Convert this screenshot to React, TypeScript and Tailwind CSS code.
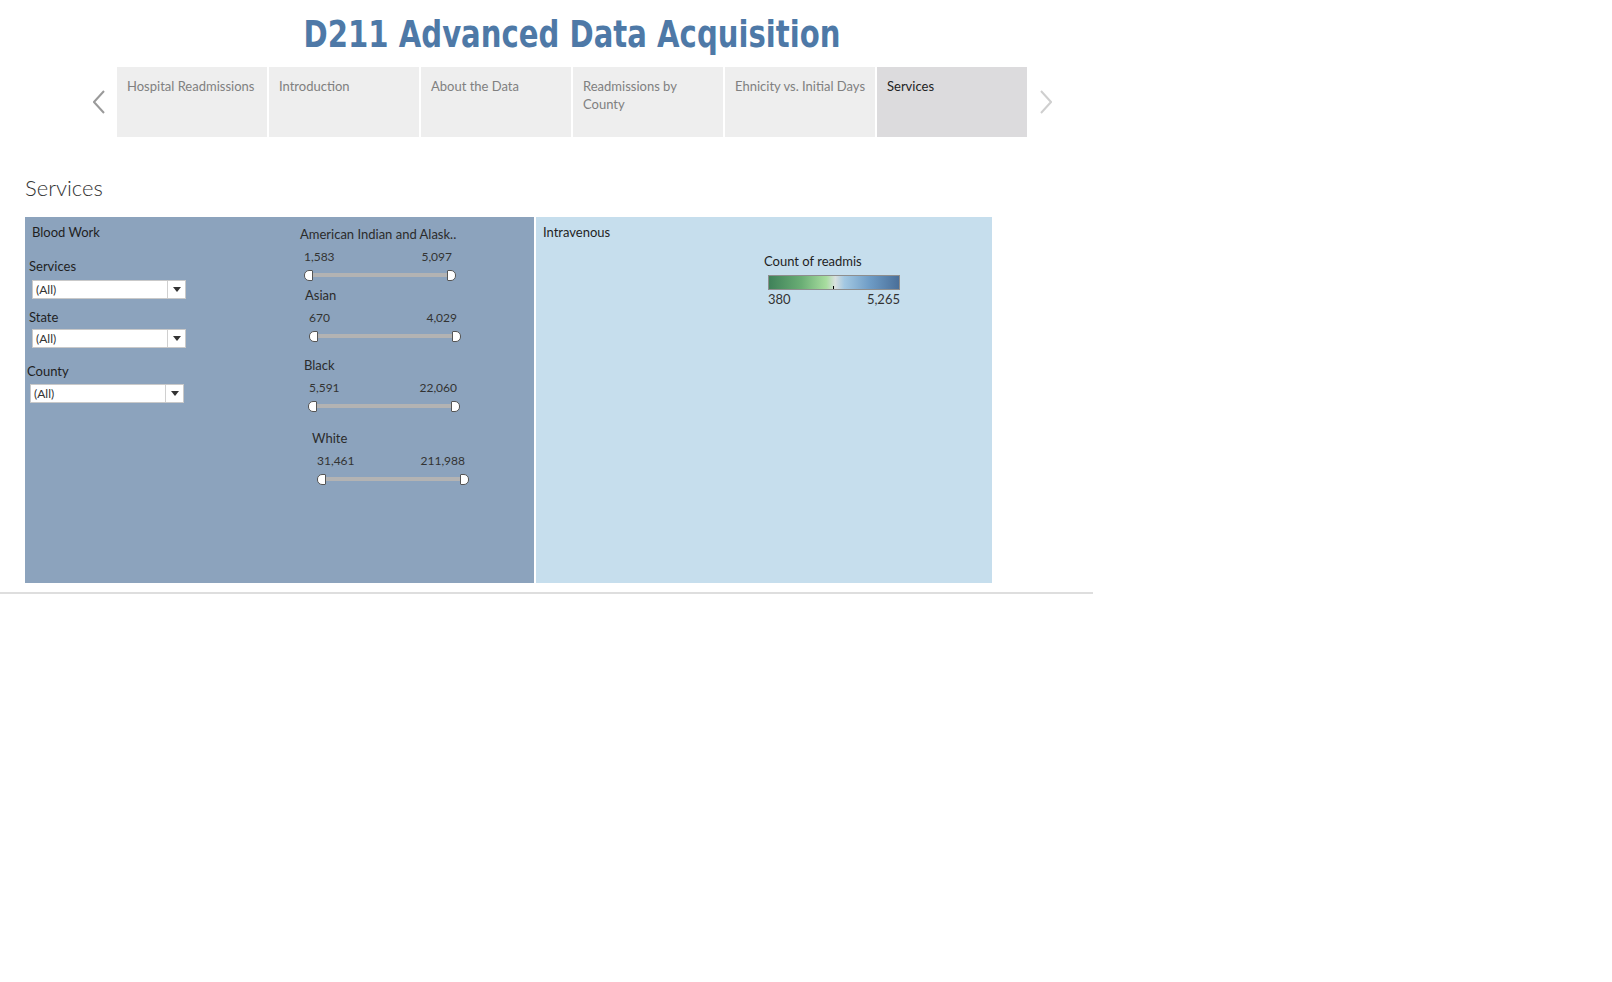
import React from "react";

const tabs = [
  "Hospital Readmissions",
  "Introduction",
  "About the Data",
  "Readmissions by County",
  "Ehnicity vs. Initial Days",
  "Services",
];

const Handle = ({ side }: { side: "left" | "right" }) => (
  <div
    className={
      side === "left"
        ? "w-[9px] h-[11px] bg-white border border-[#555] rounded-l-[5px] rounded-r-[1px]"
        : "w-[9px] h-[11px] bg-white border border-[#555] rounded-r-[5px] rounded-l-[1px]"
    }
  />
);

const Slider = ({
  label,
  min,
  max,
  labelCls,
  valuesCls,
  trackCls,
}: {
  label: string;
  min: string;
  max: string;
  labelCls: string;
  valuesCls: string;
  trackCls: string;
}) => (
  <div>
    <div className={`text-[13px] leading-[16px] text-[#2b2b2b] whitespace-nowrap ${labelCls}`}>{label}</div>
    <div className={`flex justify-between text-[12px] leading-[16px] text-[#333] ${valuesCls}`}>
      <span>{min}</span>
      <span>{max}</span>
    </div>
    <div className={`flex items-center h-[10px] ${trackCls}`}>
      <Handle side="left" />
      <div className="flex-1 h-[4px] bg-[#b3b3b3]" />
      <Handle side="right" />
    </div>
  </div>
);

const Dropdown = ({ cls }: { cls: string }) => (
  <div className={`flex h-[19px] w-[154px] bg-white border border-[#c9c9c9] ${cls}`}>
    <div className="flex-1 pl-[3px] text-[12px] leading-[17px] text-[#333]">(All)</div>
    <div className="w-[18px] border-l border-[#d0d0d0] flex items-center justify-center">
      <svg width="8" height="5" viewBox="0 0 8 5">
        <path d="M0 0 L8 0 L4 5 Z" fill="#333" />
      </svg>
    </div>
  </div>
);

export default function App() {
  return (
    <div className="relative w-[1612px] h-[982px] bg-white overflow-hidden font-['Lato','Open_Sans',sans-serif]">
      {/* title */}
      <div className="w-[1145px] pt-[12px] text-center">
        <h1 className="inline-block scale-x-[0.852] text-[38px] leading-[44px] font-bold text-[#4e79a7] font-['DejaVu_Sans_Condensed','DejaVu_Sans',sans-serif] whitespace-nowrap">
          D211 Advanced Data Acquisition
        </h1>
      </div>

      {/* story tabs */}
      <div className="mt-[11px] flex h-[70px]">
        <div className="w-[117px] flex items-center justify-end pr-[12px]">
          <svg width="12" height="24" viewBox="0 0 12 24">
            <polyline points="11,1 1,12 11,23" fill="none" stroke="#9a9a9a" strokeWidth="2" />
          </svg>
        </div>
        <div className="flex gap-[2px]">
          {tabs.map((t) => {
            const active = t === "Services";
            return (
              <div
                key={t}
                className={
                  active
                    ? "w-[150px] h-[70px] bg-[#dcdbdd] pl-[10px] pt-[10px] text-[13px] leading-[18px] text-[#222]"
                    : "w-[150px] h-[70px] bg-[#eeeeee] pl-[10px] pt-[10px] text-[13px] leading-[18px] text-[#808080]"
                }
              >
                {t === "Readmissions by County" ? (
                  <>
                    Readmissions by
                    <br />
                    County
                  </>
                ) : (
                  <span className="whitespace-nowrap">{t}</span>
                )}
              </div>
            );
          })}
        </div>
        <div className="flex items-center pl-[13px]">
          <svg width="12" height="24" viewBox="0 0 12 24">
            <polyline points="1,1 11,12 1,23" fill="none" stroke="#cfcfcf" strokeWidth="2" />
          </svg>
        </div>
      </div>

      {/* dashboard title */}
      <div className="mt-[37px] pl-[25px] text-[22px] leading-[28px] font-light text-[#333]">Services</div>

      {/* panels */}
      <div className="mt-[15px] ml-[25px] flex gap-[2px] h-[366px]">
        <div className="w-[509px] bg-[#8ca3bd] flex">
          <div className="w-[275px]">
            <div className="mt-[7px] ml-[7px] text-[13px] leading-[16px] text-[#1f1f1f]">Blood Work</div>
            <div className="mt-[18px] ml-[4px] text-[13px] leading-[16px] text-[#1f1f1f]">Services</div>
            <Dropdown cls="mt-[6px] ml-[7px]" />
            <div className="mt-[10px] ml-[4px] text-[13px] leading-[16px] text-[#1f1f1f]">State</div>
            <Dropdown cls="mt-[4px] ml-[7px]" />
            <div className="mt-[15px] ml-[2px] text-[13px] leading-[16px] text-[#1f1f1f]">County</div>
            <Dropdown cls="mt-[5px] ml-[5px]" />
          </div>
          <div className="w-[190px]">
            <Slider
              label="American Indian and Alask.."
              min="1,583"
              max="5,097"
              labelCls="mt-[9px]"
              valuesCls="mt-[7px] ml-[4px] w-[148px]"
              trackCls="mt-[5px] ml-[4px] w-[152px]"
            />
            <Slider
              label="Asian"
              min="670"
              max="4,029"
              labelCls="mt-[7px] ml-[5px]"
              valuesCls="mt-[7px] ml-[9px] w-[148px]"
              trackCls="mt-[5px] ml-[9px] w-[152px]"
            />
            <Slider
              label="Black"
              min="5,591"
              max="22,060"
              labelCls="mt-[16px] ml-[4px]"
              valuesCls="mt-[7px] ml-[9px] w-[148px]"
              trackCls="mt-[5px] ml-[8px] w-[152px]"
            />
            <Slider
              label="White"
              min="31,461"
              max="211,988"
              labelCls="mt-[19px] ml-[12px]"
              valuesCls="mt-[7px] ml-[17px] w-[148px]"
              trackCls="mt-[5px] ml-[17px] w-[152px]"
            />
          </div>
        </div>

        <div className="w-[456px] bg-[#c6deed]">
          <div className="mt-[7px] ml-[7px] text-[13px] leading-[16px] text-[#1f1f1f]">Intravenous</div>
          <div className="ml-[228px] mt-[13px] w-[140px]">
            <div className="text-[13px] leading-[16px] text-[#1f1f1f]">Count of readmis</div>
            <div className="ml-[4px] mt-[6px] relative w-[132px] h-[15px] border border-[#8e8e8e] bg-[linear-gradient(to_right,#3f8159_0%,#6aae75_25%,#a8dd9f_44%,#d9e0df_51%,#a3c8e2_58%,#6d9bc5_78%,#4a6f99_100%)]">
              <div className="absolute left-[64px] bottom-0 w-px h-[3px] bg-black" />
            </div>
            <div className="ml-[4px] w-[132px] mt-[1px] flex justify-between text-[13px] leading-[16px] text-[#333]">
              <span>380</span>
              <span>5,265</span>
            </div>
          </div>
        </div>
      </div>

      {/* bottom rule */}
      <div className="mt-[9px] w-[1093px] h-[2px] bg-[#dedede]" />
    </div>
  );
}
